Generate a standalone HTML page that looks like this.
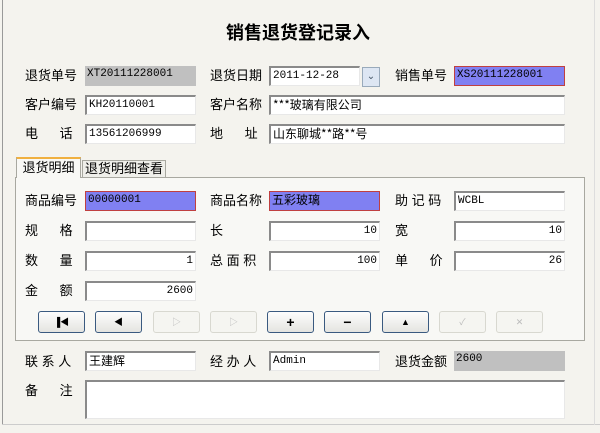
<html><head><style>
body{margin:0;width:600px;height:433px;background:#f4f3ee;font-family:"Liberation Sans","Noto Sans CJK SC",sans-serif;font-size:13px;color:#000;position:relative;overflow:hidden}
.a{position:absolute}
.l{position:absolute;font-size:13px;line-height:14px;white-space:pre}
.f{position:absolute;background:#fff;border-top:2px solid #8a8a8a;border-left:2px solid #8a8a8a;border-right:1px solid #e8e8e8;border-bottom:1px solid #e8e8e8;box-sizing:border-box;height:20px;font-family:"Liberation Mono","Noto Sans CJK SC",monospace;font-size:11px;line-height:16px;padding:0 2px;white-space:nowrap}
.g{background:#c0c0c0;border:none}
.p{background:#8080f2;border:1px solid #c04040}
.r{text-align:right}
.b{position:absolute;top:311px;width:45px;height:20px;border:1px solid #3a5a80;border-radius:3px;background:linear-gradient(#fdfdfd,#e4e4e0);font-size:9px;text-align:center;line-height:20px}
.d{border-color:#d8d8d0;color:#bbb;background:#f5f5f1}
</style></head><body>
<div class="a" style="left:2px;top:0;width:1px;height:425px;background:#999"></div>
<div class="a" style="left:2px;top:424px;width:598px;height:1px;background:#ccc"></div>
<div class="a" style="left:594px;top:0;width:1px;height:425px;background:#ddd"></div>
<div class="l" style="left:226px;top:23px;font-size:18px;font-weight:bold;line-height:20px">销售退货登记录入</div>

<div class="l" style="left:25px;top:69px">退货单号</div>
<div class="f g" style="left:85px;top:66px;width:111px">XT20111228001</div>
<div class="l" style="left:210px;top:69px">退货日期</div>
<div class="f" style="left:269px;top:66px;width:91px">2011-12-28</div>
<div class="a" style="left:362px;top:67px;width:16px;height:18px;border:1px solid #9ab;background:#dde6f3;color:#456;font-size:10px;text-align:center;line-height:18px">⌄</div>
<div class="l" style="left:395px;top:69px">销售单号</div>
<div class="f p" style="left:454px;top:66px;width:111px">XS20111228001</div>

<div class="l" style="left:25px;top:98px">客户编号</div>
<div class="f" style="left:85px;top:95px;width:111px">KH20110001</div>
<div class="l" style="left:210px;top:98px">客户名称</div>
<div class="f" style="left:269px;top:95px;width:296px;font-family:'Noto Sans CJK SC',sans-serif;font-size:12px">***玻璃有限公司</div>

<div class="l" style="left:25px;top:127px">电      话</div>
<div class="f" style="left:85px;top:124px;width:111px">13561206999</div>
<div class="l" style="left:210px;top:127px">地      址</div>
<div class="f" style="left:269px;top:124px;width:296px;font-family:'Noto Sans CJK SC',sans-serif;font-size:12px">山东聊城**路**号</div>

<div class="a" style="left:15px;top:177px;width:570px;height:164px;border:1px solid #a8a8a0;background:#f8f8f5;box-sizing:border-box"></div>
<div class="a" style="left:16px;top:157px;width:65px;height:21px;border:1px solid #a8a8a0;border-bottom:none;border-top:2px solid #f0b040;background:#f8f8f5;box-sizing:border-box;font-size:13px;line-height:18px;text-align:center">退货明细</div>
<div class="a" style="left:82px;top:160px;width:84px;height:17px;border:1px solid #a8a8a0;border-bottom:none;background:#efefea;box-sizing:border-box;font-size:13px;line-height:16px;text-align:center">退货明细查看</div>

<div class="l" style="left:25px;top:194px">商品编号</div>
<div class="f p" style="left:85px;top:191px;width:111px">00000001</div>
<div class="l" style="left:210px;top:194px">商品名称</div>
<div class="f p" style="left:269px;top:191px;width:111px;font-family:'Noto Sans CJK SC',sans-serif;font-size:12px">五彩玻璃</div>
<div class="l" style="left:395px;top:194px">助 记 码</div>
<div class="f" style="left:454px;top:191px;width:111px">WCBL</div>

<div class="l" style="left:25px;top:224px">规      格</div>
<div class="f" style="left:85px;top:221px;width:111px"></div>
<div class="l" style="left:210px;top:224px">长</div>
<div class="f r" style="left:269px;top:221px;width:111px">10</div>
<div class="l" style="left:395px;top:224px">宽</div>
<div class="f r" style="left:454px;top:221px;width:111px">10</div>

<div class="l" style="left:25px;top:254px">数      量</div>
<div class="f r" style="left:85px;top:251px;width:111px">1</div>
<div class="l" style="left:210px;top:254px">总 面 积</div>
<div class="f r" style="left:269px;top:251px;width:111px">100</div>
<div class="l" style="left:395px;top:254px">单      价</div>
<div class="f r" style="left:454px;top:251px;width:111px">26</div>

<div class="l" style="left:25px;top:284px">金      额</div>
<div class="f r" style="left:85px;top:281px;width:111px">2600</div>

<div class="b" style="left:38px">▐◀</div>
<div class="b" style="left:95px">◀</div>
<div class="b d" style="left:153px">▷</div>
<div class="b d" style="left:210px">▷</div>
<div class="b" style="left:267px;font-size:14px;font-weight:bold">+</div>
<div class="b" style="left:324px;font-size:14px;font-weight:bold">−</div>
<div class="b" style="left:382px">▲</div>
<div class="b d" style="left:439px">✓</div>
<div class="b d" style="left:496px">✕</div>

<div class="l" style="left:25px;top:355px">联 系 人</div>
<div class="f" style="left:85px;top:351px;width:111px;font-family:'Noto Sans CJK SC',sans-serif;font-size:12px">王建辉</div>
<div class="l" style="left:210px;top:355px">经 办 人</div>
<div class="f" style="left:269px;top:351px;width:111px">Admin</div>
<div class="l" style="left:395px;top:355px">退货金额</div>
<div class="f g" style="left:454px;top:351px;width:111px">2600</div>

<div class="l" style="left:25px;top:384px">备      注</div>
<div class="f" style="left:85px;top:380px;width:480px;height:39px"></div>
</body></html>
